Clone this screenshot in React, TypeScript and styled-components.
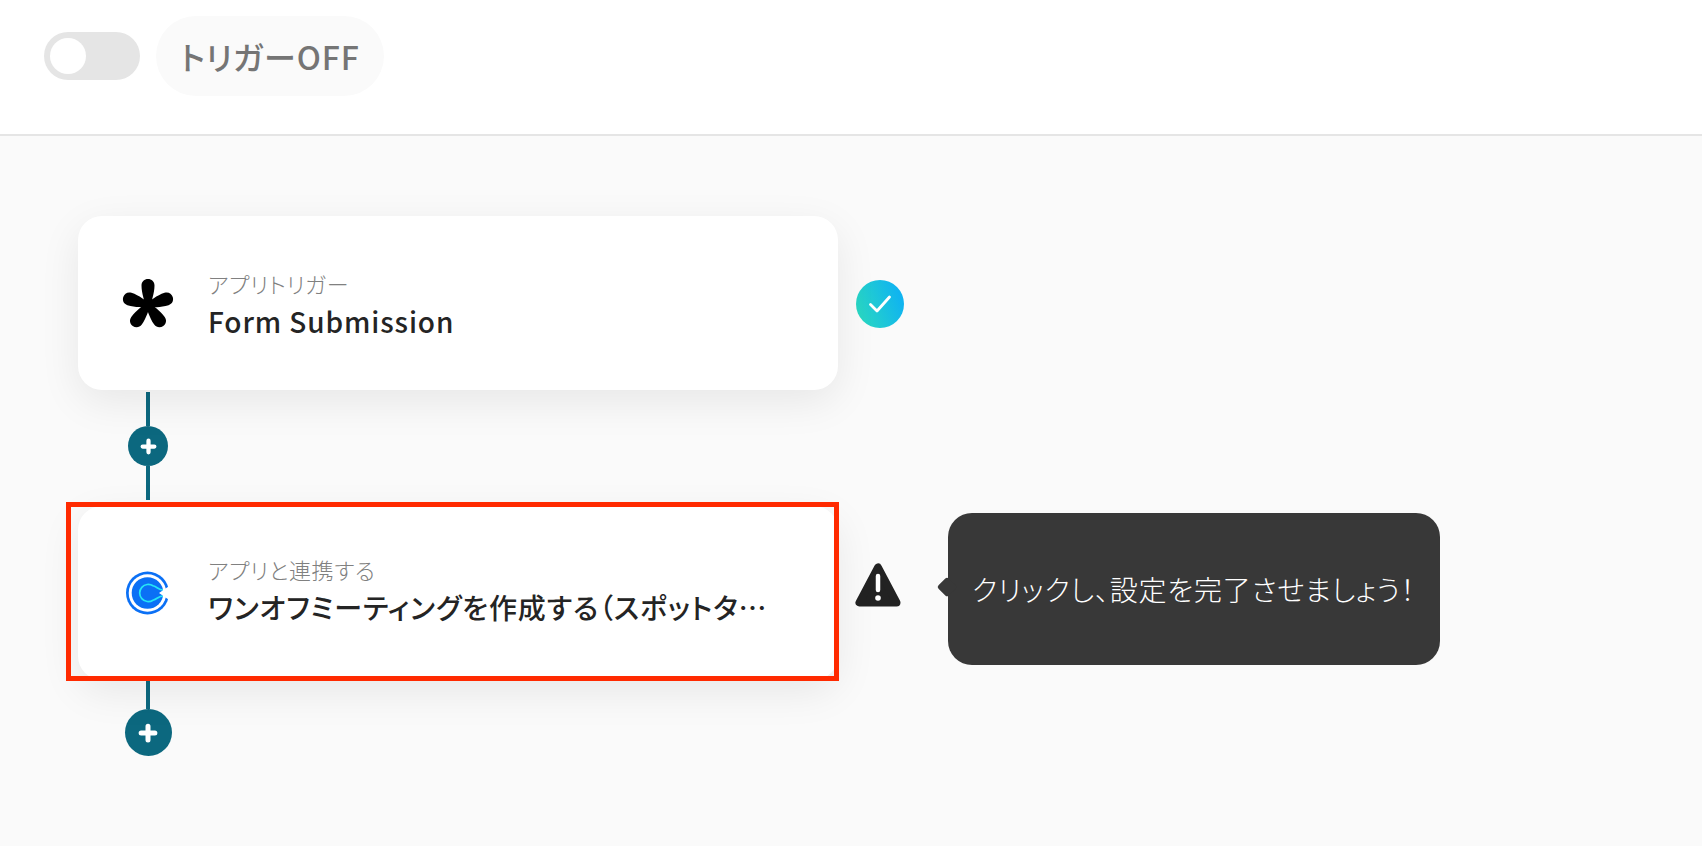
import { FC, ReactNode } from "react";
import styled, { createGlobalStyle } from "styled-components";

const GlobalStyle = createGlobalStyle`
  html, body {
    margin: 0;
    padding: 0;
    background: #fafafa;
  }
  body {
    font-family: "Noto Sans CJK JP", "Noto Sans", sans-serif;
    font-feature-settings: "palt";
  }
`;

const TEAL = "#0c687f";

const Page = styled.div`
  width: 1702px;
  height: 846px;
  overflow: hidden;
  background: #fafafa;
`;

const Header = styled.header`
  height: 118px;
  display: flex;
  align-items: flex-start;
  gap: 16px;
  padding: 16px 0 0 44px;
  background: #fff;
  border-bottom: 2px solid #e5e5e5;
`;

const Toggle = styled.div`
  width: 96px;
  height: 48px;
  margin-top: 16px;
  padding: 6px;
  box-sizing: border-box;
  border-radius: 24px;
  background: #e5e5e5;
`;

const Knob = styled.div`
  width: 36px;
  height: 36px;
  border-radius: 50%;
  background: #fff;
`;

const StatusPill = styled.div`
  height: 80px;
  width: 228px;
  display: flex;
  align-items: center;
  justify-content: center;
  border-radius: 40px;
  background: #fafafa;
  color: #757575;
  font-size: 32px;
  font-weight: 500;
  letter-spacing: 0.9px;
`;

const Canvas = styled.main`
  padding: 80px 0 0 78px;
`;

const Row = styled.div<{ $top?: number }>`
  display: flex;
  align-items: flex-start;
  margin-top: ${(p) => p.$top ?? 0}px;
`;

const Card = styled.div`
  position: relative;
  width: 760px;
  height: 174px;
  flex: none;
  display: flex;
  align-items: center;
  box-sizing: border-box;
  padding-left: 40px;
  border-radius: 24px;
  background: #fff;
  box-shadow: 0 12px 40px rgba(0, 0, 0, 0.08);
`;

const HighlightBox = styled.div`
  position: absolute;
  top: -4px;
  left: -12px;
  right: -1px;
  bottom: -1px;
  border: 5px solid #ff2a00;
`;

const IconSlot = styled.div`
  width: 60px;
  height: 60px;
  flex: none;
  display: flex;
  align-items: center;
  justify-content: center;
`;

const CardText = styled.div<{ $shift: number }>`
  width: 566px;
  margin-left: 30px;
  margin-top: ${(p) => p.$shift}px;
`;

const CardLabel = styled.div`
  margin-bottom: 2px;
  color: #808080;
  font-size: 22px;
  font-weight: 300;
  line-height: 30px;
  letter-spacing: 0.7px;
`;

const CardTitle = styled.div`
  color: #242424;
  font-size: 28px;
  font-weight: 500;
  line-height: 42px;
  letter-spacing: 0.9px;
  white-space: nowrap;
  overflow: hidden;
  text-overflow: ellipsis;
`;

const Connector = styled.div<{ $gap: number }>`
  width: 48px;
  margin-left: 46px;
  padding-top: ${(p) => p.$gap}px;
  display: flex;
  flex-direction: column;
  align-items: center;
`;

const Line = styled.div<{ $height: number }>`
  width: 4px;
  height: ${(p) => p.$height}px;
  background: ${TEAL};
`;

const AddButton = styled.div<{ $size: number }>`
  width: ${(p) => p.$size}px;
  height: ${(p) => p.$size}px;
  flex: none;
  display: flex;
  align-items: center;
  justify-content: center;
  border-radius: 50%;
  background: ${TEAL};
`;

const CheckBadge = styled.div`
  width: 48px;
  height: 48px;
  margin: 64px 0 0 18px;
  display: flex;
  align-items: center;
  justify-content: center;
  border-radius: 50%;
  background: linear-gradient(70deg, #2ddcbc 0%, #10b4f0 85%);
`;

const WarnSlot = styled.div`
  width: 46px;
  height: 44px;
  margin: 57px 0 0 17px;
`;

const Bubble = styled.div`
  position: relative;
  width: 492px;
  height: 152px;
  margin: 7px 0 0 47px;
  box-sizing: border-box;
  padding-left: 24px;
  display: flex;
  align-items: center;
  border-radius: 24px;
  background: #383838;
  color: #fff;
  font-size: 28px;
  font-weight: 300;
  letter-spacing: 0.8px;
  white-space: nowrap;

  &::before {
    content: "";
    position: absolute;
    left: -10px;
    top: 65px;
    width: 18px;
    height: 18px;
    background: #383838;
    border-radius: 3px;
    transform: rotate(45deg) scale(0.8);
  }
`;

const PlusIcon: FC<{ size: number }> = ({ size }) => (
  <svg width={size} height={size} viewBox="0 0 16 16">
    <path d="M8 2.500v11M2.500 8h11" stroke="#fff" strokeWidth="4" strokeLinecap="round" />
  </svg>
);

const CheckIcon = () => (
  <svg width="24" height="20" viewBox="0 0 24 20">
    <path
      d="M2.500 10.500l6.500 6.500L21.500 3"
      fill="none"
      stroke="#fff"
      strokeWidth="2.800"
      strokeLinecap="round"
      strokeLinejoin="round"
    />
  </svg>
);

const AsteriskLogo = () => (
  <svg width="52" height="50" viewBox="0 0 52 50">
    <g transform="translate(26 27)">
      {[0, 72, 144, 216, 288].map((angle) => (
        <path
          key={angle}
          transform={`rotate(${angle})`}
          d="M-2.500 3C-3 -4 -6.500 -11 -6.500 -19.500C-6.500 -23.500 -3.500 -26 0 -26C3.500 -26 6.500 -23.500 6.500 -19.500C6.500 -11 3 -4 2.500 3Z"
          fill="#000"
        />
      ))}
    </g>
  </svg>
);

const CalendlyLogo = () => (
  <svg width="44" height="44" viewBox="0 0 44 44">
    <circle cx="21.500" cy="22" r="21.500" fill="#0b70f5" />
    <circle cx="21.500" cy="22" r="18.800" fill="#fff" />
    <circle cx="21.500" cy="22" r="15.800" fill="#0b70f5" />
    <path
      d="M37 19C32.500 19 31.500 16 27 14.800A8.600 8.600 0 1 0 27 29.200C31.500 28 32.500 25 37 25"
      fill="none"
      stroke="#26e6f5"
      strokeWidth="1.700"
    />
    <path d="M33 22L44 14.500V29.500Z" fill="#fff" />
  </svg>
);

const WarningIcon = () => (
  <svg width="46" height="44" viewBox="0 0 46 44">
    <path
      d="M23 4.500L4.500 39.500H41.500Z"
      fill="#222"
      stroke="#222"
      strokeWidth="8"
      strokeLinejoin="round"
    />
    <path d="M23 13v14" stroke="#fff" strokeWidth="4.500" strokeLinecap="round" />
    <circle cx="23" cy="35" r="2.800" fill="#fff" />
  </svg>
);

const FlowCard: FC<{
  icon: ReactNode;
  label: string;
  title: string;
  textShift: number;
  highlighted?: boolean;
}> = ({ icon, label, title, textShift, highlighted }) => (
  <Card>
    <IconSlot>{icon}</IconSlot>
    <CardText $shift={textShift}>
      <CardLabel>{label}</CardLabel>
      <CardTitle>{title}</CardTitle>
    </CardText>
    {highlighted && <HighlightBox />}
  </Card>
);

const App = () => (
  <Page>
    <GlobalStyle />
    <Header>
      <Toggle>
        <Knob />
      </Toggle>
      <StatusPill>トリガーOFF</StatusPill>
    </Header>
    <Canvas>
      <Row>
        <FlowCard
          icon={<AsteriskLogo />}
          label="アプリトリガー"
          title="Form Submission"
          textShift={3}
        />
        <CheckBadge>
          <CheckIcon />
        </CheckBadge>
      </Row>
      <Connector $gap={2}>
        <Line $height={34} />
        <AddButton $size={40}>
          <PlusIcon size={17} />
        </AddButton>
        <Line $height={34} />
      </Connector>
      <Row $top={6}>
        <FlowCard
          icon={<CalendlyLogo />}
          label="アプリと連携する"
          title="ワンオフミーティングを作成する（スポットタイプを指定）"
          textShift={-5}
          highlighted
        />
        <WarnSlot>
          <WarningIcon />
        </WarnSlot>
        <Bubble>クリックし、設定を完了させましょう！</Bubble>
      </Row>
      <Connector $gap={1}>
        <Line $height={28} />
        <AddButton $size={47}>
          <PlusIcon size={20} />
        </AddButton>
      </Connector>
    </Canvas>
  </Page>
);

export default App;
